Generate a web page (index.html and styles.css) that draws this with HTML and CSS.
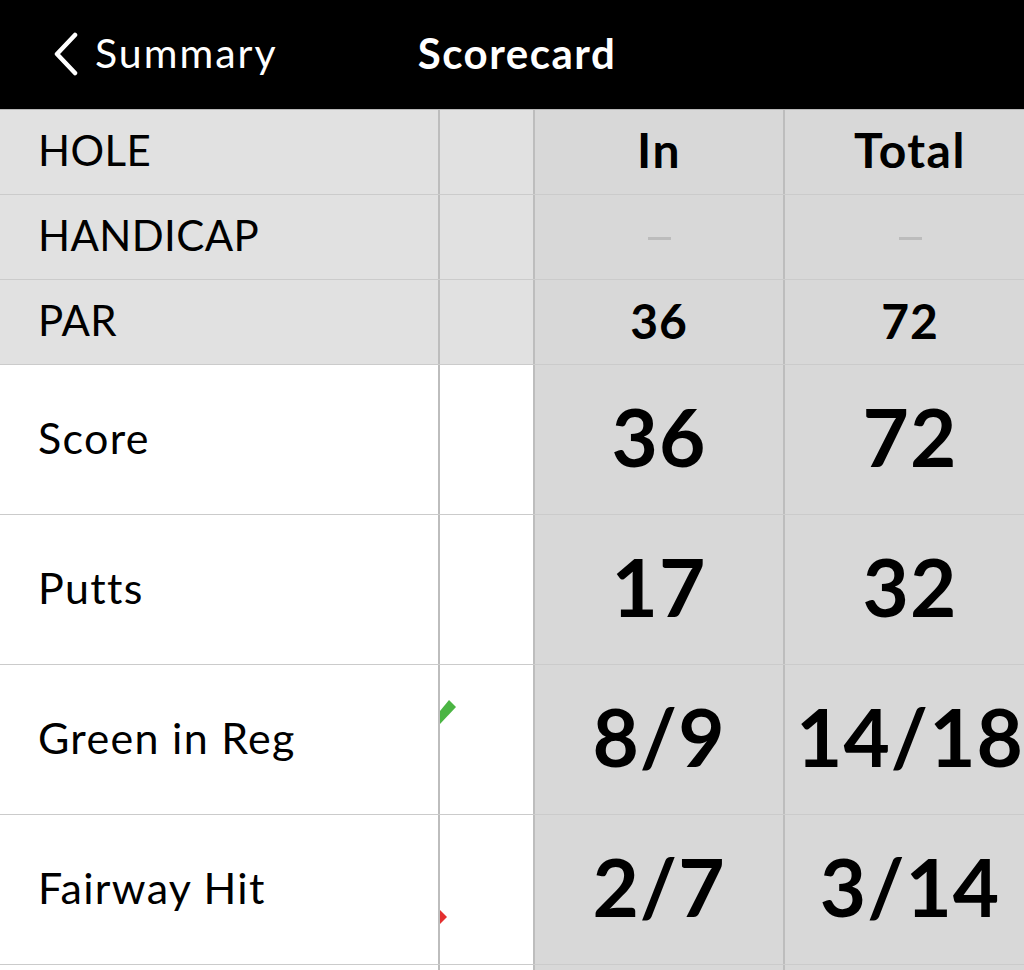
FILE: index.html
```html
<!DOCTYPE html>
<html>
<head>
<meta charset="utf-8">
<link rel="stylesheet" href="styles.css">
</head>
<body>
<div class="screen">
  <header class="nav">
    <div class="back">
      <svg class="chev" width="30" height="44" viewBox="0 0 30 44"><polyline points="24,3 6,22 24,41" fill="none" stroke="#fff" stroke-width="4.5" stroke-linecap="round" stroke-linejoin="round"/></svg>
      <span class="back-text">Summary</span>
    </div>
    <div class="title">Scorecard</div>
  </header>
  <div class="card">
    <div class="row info">
      <div class="cell label">HOLE</div>
      <div class="cell gap"></div>
      <div class="cell num head">In</div>
      <div class="cell num head">Total</div>
    </div>
    <div class="row info">
      <div class="cell label">HANDICAP</div>
      <div class="cell gap"></div>
      <div class="cell num"><span class="dash"></span></div>
      <div class="cell num"><span class="dash"></span></div>
    </div>
    <div class="row info">
      <div class="cell label">PAR</div>
      <div class="cell gap"></div>
      <div class="cell num par">36</div>
      <div class="cell num par">72</div>
    </div>
    <div class="row stat">
      <div class="cell label">Score</div>
      <div class="cell gap"></div>
      <div class="cell num big">36</div>
      <div class="cell num big">72</div>
    </div>
    <div class="row stat">
      <div class="cell label">Putts</div>
      <div class="cell gap"></div>
      <div class="cell num big">17</div>
      <div class="cell num big">32</div>
    </div>
    <div class="row stat">
      <div class="cell label">Green in Reg</div>
      <div class="cell gap">
        <svg class="mark mark-green" width="20" height="26" viewBox="0 0 20 26"><polygon points="0,11 9,0 16,7 0,24" fill="#4bb543"/></svg>
      </div>
      <div class="cell num big">8/9</div>
      <div class="cell num big">14/18</div>
    </div>
    <div class="row stat">
      <div class="cell label">Fairway Hit</div>
      <div class="cell gap">
        <svg class="mark mark-red" width="10" height="16" viewBox="0 0 10 16"><polygon points="0,0 7,7 0,14" fill="#e42f2f"/></svg>
      </div>
      <div class="cell num big">2/7</div>
      <div class="cell num big">3/14</div>
    </div>
    <div class="row stat">
      <div class="cell label"></div>
      <div class="cell gap"></div>
      <div class="cell num big"></div>
      <div class="cell num big"></div>
    </div>
  </div>
</div>
</body>
</html>
```

FILE: styles.css
```css
html, body {
  margin: 0;
  padding: 0;
  background: #fff;
}
body {
  font-family: Lato, "Open Sans", sans-serif;
  color: #000;
  overflow: hidden;
}
.screen {
  width: 1024px;
  height: 970px;
  overflow: hidden;
}
.nav {
  position: relative;
  height: 110px;
  background: #000;
  display: flex;
  align-items: center;
  box-sizing: border-box;
  border-bottom: 1px solid #b8b8b8;
}
.back {
  display: flex;
  align-items: center;
  padding-left: 51px;
  color: #fff;
  padding-bottom: 4px;
}
.chev {
  display: block;
  margin-top: 2px;
}
.back-text {
  font-size: 41px;
  font-weight: 400;
  margin-left: 14px;
  letter-spacing: 2px;
  padding-bottom: 0;
}
.title {
  position: absolute;
  left: 0;
  right: 0;
  top: 0;
  bottom: 0;
  display: flex;
  align-items: center;
  justify-content: center;
  color: #fff;
  font-size: 42px;
  font-weight: 700;
  letter-spacing: 1.5px;
  padding-left: 10px;
  padding-bottom: 4px;
  pointer-events: none;
}
.card {
  width: 1040px;
}
.row {
  display: grid;
  grid-template-columns: 440px 95px 250px 250px;
  box-sizing: border-box;
  border-bottom: 1px solid #cbcbcb;
}
.row.info {
  height: 85px;
}
.row.stat {
  height: 150px;
}
.cell {
  box-sizing: border-box;
  border-right: 2px solid #bdbdbd;
  display: flex;
  align-items: center;
  position: relative;
  overflow: hidden;
}
.cell:last-child {
  border-right: none;
}
.info .label,
.info .gap {
  background: #e1e1e1;
}
.info .num,
.stat .num {
  background: #d8d8d8;
}
.stat .label,
.stat .gap {
  background: #fff;
}
.label {
  padding-left: 38px;
  padding-bottom: 4px;
  font-size: 43px;
  font-weight: 400;
  letter-spacing: 1.3px;
}
.info .label {
  font-size: 42px;
  letter-spacing: 0.4px;
}
.num {
  justify-content: center;
  font-weight: 700;
}
.head {
  font-size: 48px;
  letter-spacing: 1.5px;
  padding-bottom: 6px;
}
.par {
  font-size: 48px;
  letter-spacing: 1px;
  padding-bottom: 4px;
}
.big {
  font-size: 80px;
  letter-spacing: 1px;
  padding-bottom: 8px;
}
.dash {
  display: block;
  width: 23px;
  height: 3px;
  background: #bcbcbc;
  margin-top: 2px;
}
.mark {
  position: absolute;
  left: 0;
  display: block;
}
.mark-green {
  top: 35px;
}
.mark-red {
  top: 95px;
}
```
